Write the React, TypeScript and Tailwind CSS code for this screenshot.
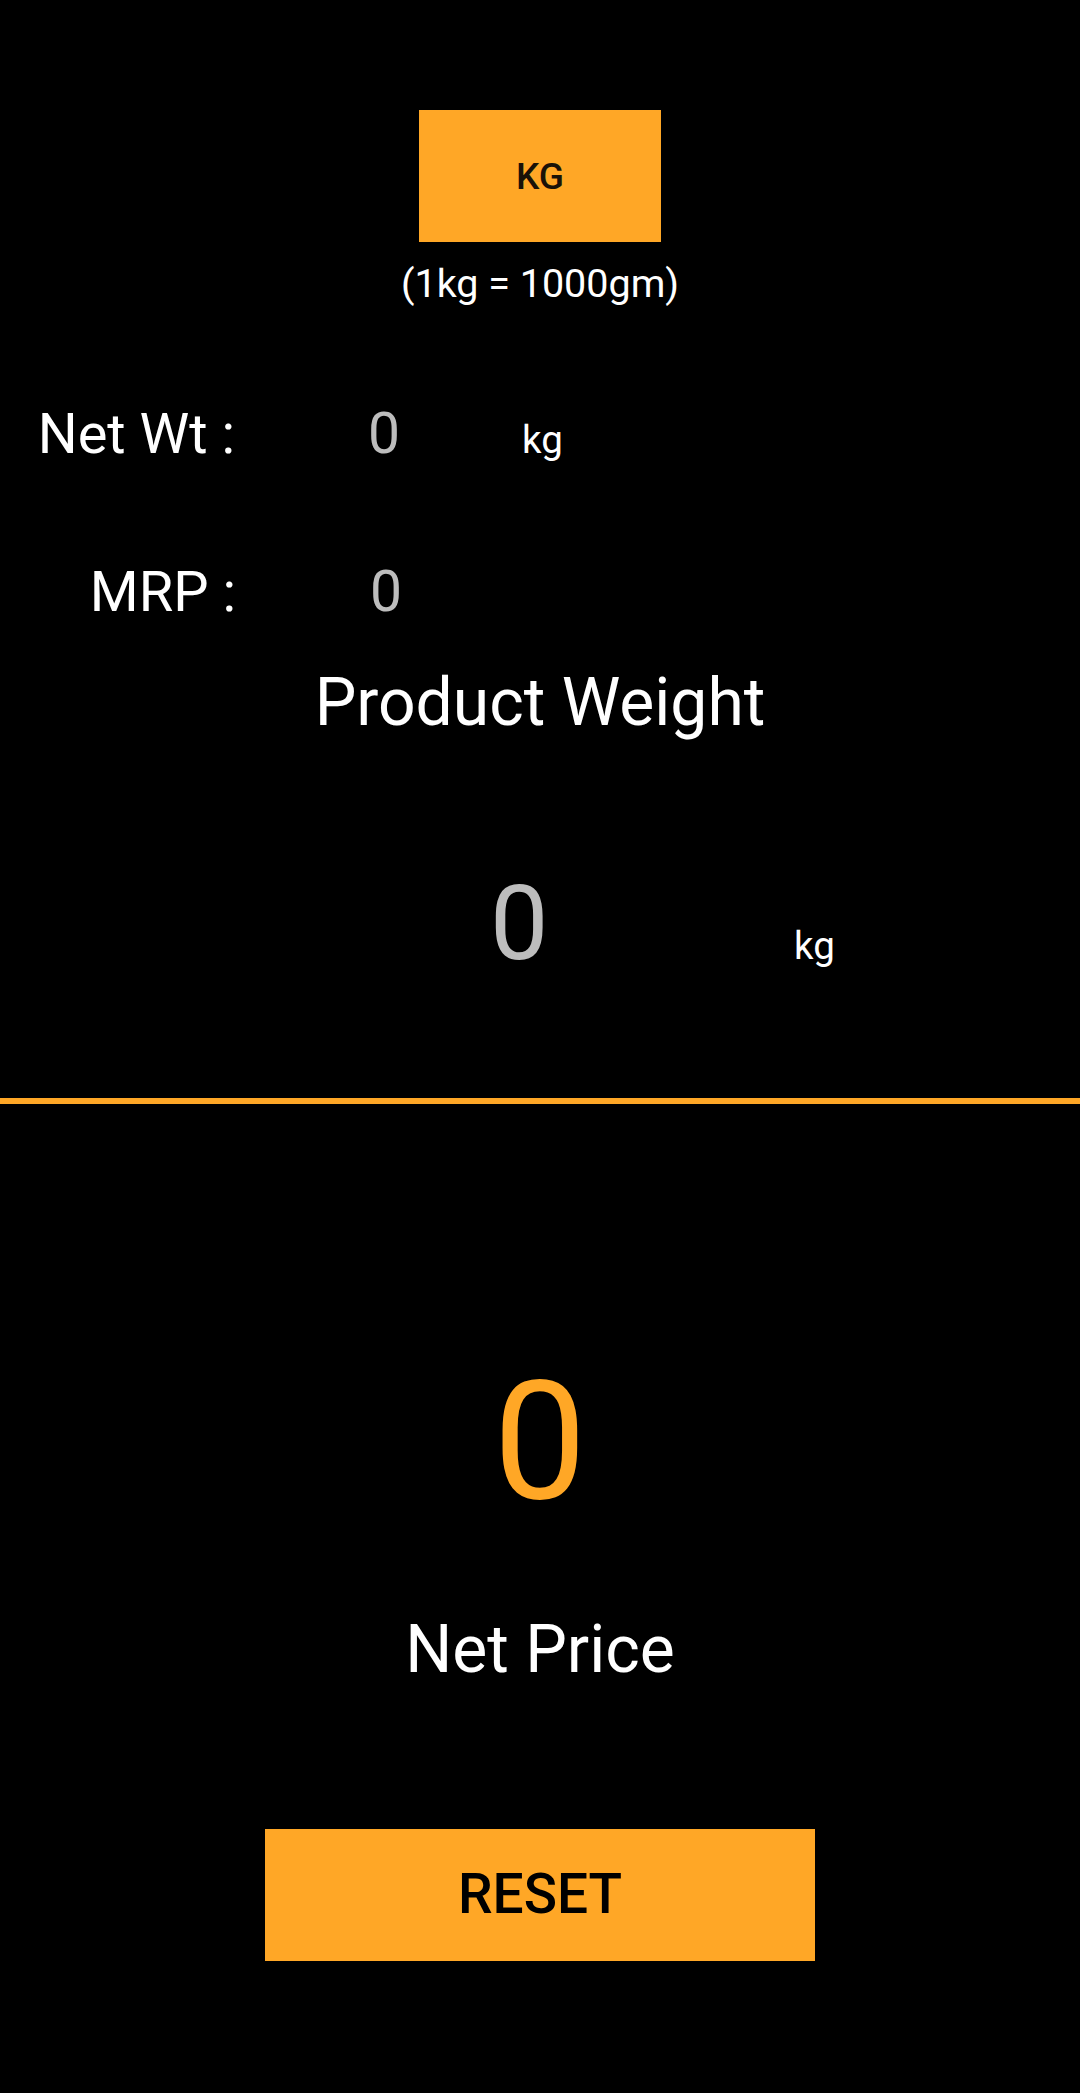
import React from "react";

export default function App() {
  return (
    <div className="min-h-[2093px] w-full bg-black font-['Roboto',sans-serif] text-white flex flex-col">
      {/* KG toggle */}
      <div className="mt-[110px] flex justify-center">
        <div className="w-[242px] h-[132px] bg-[#FFA726] flex items-center justify-center text-[37px] leading-none font-medium text-[#1a1208]">
          KG
        </div>
      </div>
      <div className="mt-[22px] text-center text-[39.5px] leading-none text-white">(1kg = 1000gm)</div>

      {/* Net Wt row */}
      <div className="mt-[101px] flex items-baseline h-[57px]">
        <div className="w-[235px] text-right text-[56px] leading-none">Net Wt :</div>
        <div className="ml-[133px] w-[154px] text-[57px] leading-none text-[#bdbdbd]">0</div>
        <div className="text-[38.5px] leading-none">kg</div>
      </div>

      {/* MRP row */}
      <div className="mt-[101px] flex items-baseline h-[57px]">
        <div className="w-[236px] text-right text-[56px] leading-none">MRP :</div>
        <div className="ml-[134px] text-[57px] leading-none text-[#bdbdbd]">0</div>
      </div>

      <div className="mt-[50px] text-center text-[66px] leading-none">Product Weight</div>

      {/* Product weight value */}
      <div className="mt-[136px] flex items-baseline h-[104px]">
        <div className="ml-[490px] w-[304px] text-[104px] leading-none text-[#bdbdbd]">0</div>
        <div className="text-[38.5px] leading-none">kg</div>
      </div>

      <div className="mt-[122px] h-[6px] w-full bg-[#FFA726]" />

      <div className="mt-[255px] text-center text-[166px] leading-none text-[#FFA726]">0</div>

      <div className="mt-[92px] text-center text-[66px] leading-none">Net Price</div>

      <div className="mt-[146px] flex justify-center">
        <div className="w-[550px] h-[132px] bg-[#FFA726] flex items-center justify-center text-[55px] leading-none font-medium text-black">
          RESET
        </div>
      </div>
    </div>
  );
}
